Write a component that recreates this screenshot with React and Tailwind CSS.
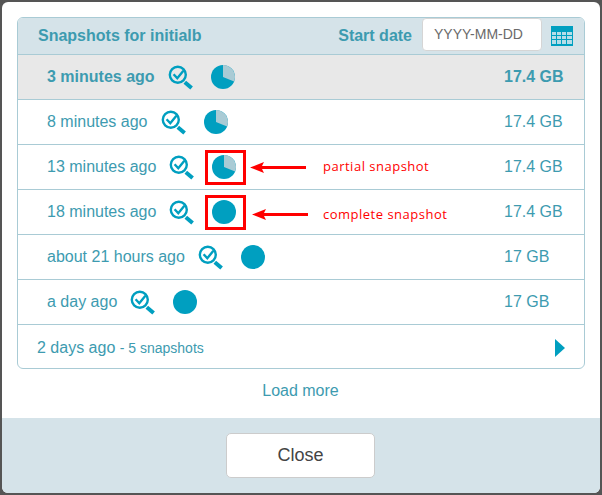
const rows = [
  { label: "3 minutes ago", size: "17.4 GB", partial: true, active: true },
  { label: "8 minutes ago", size: "17.4 GB", partial: true },
  { label: "13 minutes ago", size: "17.4 GB", partial: true, note: "partial snapshot" },
  { label: "18 minutes ago", size: "17.4 GB", note: "complete snapshot", lower: true },
  { label: "about 21 hours ago", size: "17 GB" },
  { label: "a day ago", size: "17 GB" },
];

function Magnifier() {
  return (
    <svg width="25" height="25" viewBox="0 0 25 25" fill="none" className="shrink-0">
      <circle cx="9.8" cy="9.8" r="8" stroke="#009fc0" strokeWidth="2.4" />
      <path d="M5.6 9.2 9.3 13.2 15.4 5.8" stroke="#009fc0" strokeWidth="2.4" />
      <path d="M16.8 17.2 23.6 23" stroke="#009fc0" strokeWidth="4" />
    </svg>
  );
}

function Pie({ partial }) {
  return (
    <svg width="24" height="24" viewBox="0 0 24 24" className="shrink-0">
      <circle cx="12" cy="12" r="12" fill="#009fc0" />
      {partial && <path d="M12 12V0A12 12 0 0 1 23.1 16.5Z" fill="#a9cbd5" />}
    </svg>
  );
}

function Calendar() {
  return (
    <svg width="22" height="20" viewBox="0 0 22 20" className="shrink-0">
      <rect width="22" height="20" fill="#009fc0" />
      <g fill="#b5dde8">
        <rect x="1" y="6" width="4" height="3" />
        <rect x="6" y="6" width="4" height="3" />
        <rect x="11" y="6" width="4" height="3" />
        <rect x="16" y="6" width="5" height="3" />
        <rect x="1" y="10" width="4" height="3" />
        <rect x="6" y="10" width="4" height="3" />
        <rect x="11" y="10" width="4" height="3" />
        <rect x="16" y="10" width="5" height="3" />
        <rect x="1" y="14" width="4" height="4" />
        <rect x="6" y="14" width="4" height="4" />
        <rect x="11" y="14" width="4" height="4" />
        <rect x="16" y="14" width="5" height="4" />
      </g>
    </svg>
  );
}

// red annotations drawn over the screenshot, not part of the table itself
function Note({ text, lower }) {
  return (
    <>
      <div className="absolute left-[187px] top-[5px] w-[41px] h-[35px] border-[3px] border-[#ff0000]" />
      <svg
        width="56"
        height="11"
        viewBox="0 0 56 11"
        className={lower ? "absolute left-[234px] top-[19px]" : "absolute left-[232px] top-[17px]"}
      >
        <path d="M0 5.5 14 0 12 4H56V7H12L14 11Z" fill="#ff0000" />
      </svg>
      <span
        className={`absolute left-[305px] text-[13px] leading-[18px] tracking-[0.5px] text-[#ff0000] font-['Open_Sans',sans-serif] ${lower ? "top-[15px]" : "top-[12px]"}`}
      >
        {text}
      </span>
    </>
  );
}

function Row({ row }) {
  return (
    <div className={`relative h-[45px] flex items-center pl-[29px] pr-[23px] border-b border-[#a9cbd5] ${row.active ? "bg-[#e8e8e8] font-bold" : ""}`}>
      <span>{row.label}</span>
      <span className="ml-[13px] flex items-center gap-[18px]">
        <Magnifier />
        <Pie partial={row.partial} />
      </span>
      <span className="absolute left-[486px]">{row.size}</span>
      {row.note && <Note text={row.note} lower={row.lower} />}
    </div>
  );
}

export default function App() {
  return (
    <div className="w-[602px] h-[495px] bg-[#555555] p-[2px] font-['Liberation_Sans',Arial,sans-serif] text-[16px] text-[#3d9bb0]">
      <div className="h-[491px] bg-white rounded-[6px] overflow-hidden flex flex-col">
        <div className="mx-[15px] mt-[15px] h-[352px] border border-[#a9cbd5] rounded-[6px] overflow-hidden shrink-0">
          <div className="h-[37px] flex items-center bg-[#d5e3e9] border-b border-[#a9cbd5] pl-[20px] pr-[11px] font-bold">
            <span>Snapshots for initialb</span>
            <span className="ml-auto">Start date</span>
            <span className="ml-[10px] w-[120px] h-[33px] -mt-[3px] flex items-center pl-[11px] bg-white border border-[#d5d5d5] rounded-[4px] text-[14px] text-[#6a6a6a] font-normal">
              YYYY-MM-DD
            </span>
            <span className="ml-[9px]"><Calendar /></span>
          </div>
          {rows.map((row) => (
            <Row key={row.label} row={row} />
          ))}
          <div className="h-[45px] flex items-center justify-between pl-[19px] pr-[19px]">
            <span>
              2 days ago <span className="text-[14px]">- 5 snapshots</span>
            </span>
            <svg width="10" height="18" viewBox="0 0 10 18">
              <path d="M0 0 10 9 0 18Z" fill="#009fc0" />
            </svg>
          </div>
        </div>
        <div className="h-[49px] pb-[6px] pr-[1px] flex items-center justify-center">Load more</div>
        <div className="flex-1 bg-[#d5e3e9] pr-[1px] flex items-center justify-center">
          <div className="w-[149px] h-[45px] flex items-center justify-center bg-white border border-[#cccccc] rounded-[5px] text-[18px] text-[#444444]">
            Close
          </div>
        </div>
      </div>
    </div>
  );
}
